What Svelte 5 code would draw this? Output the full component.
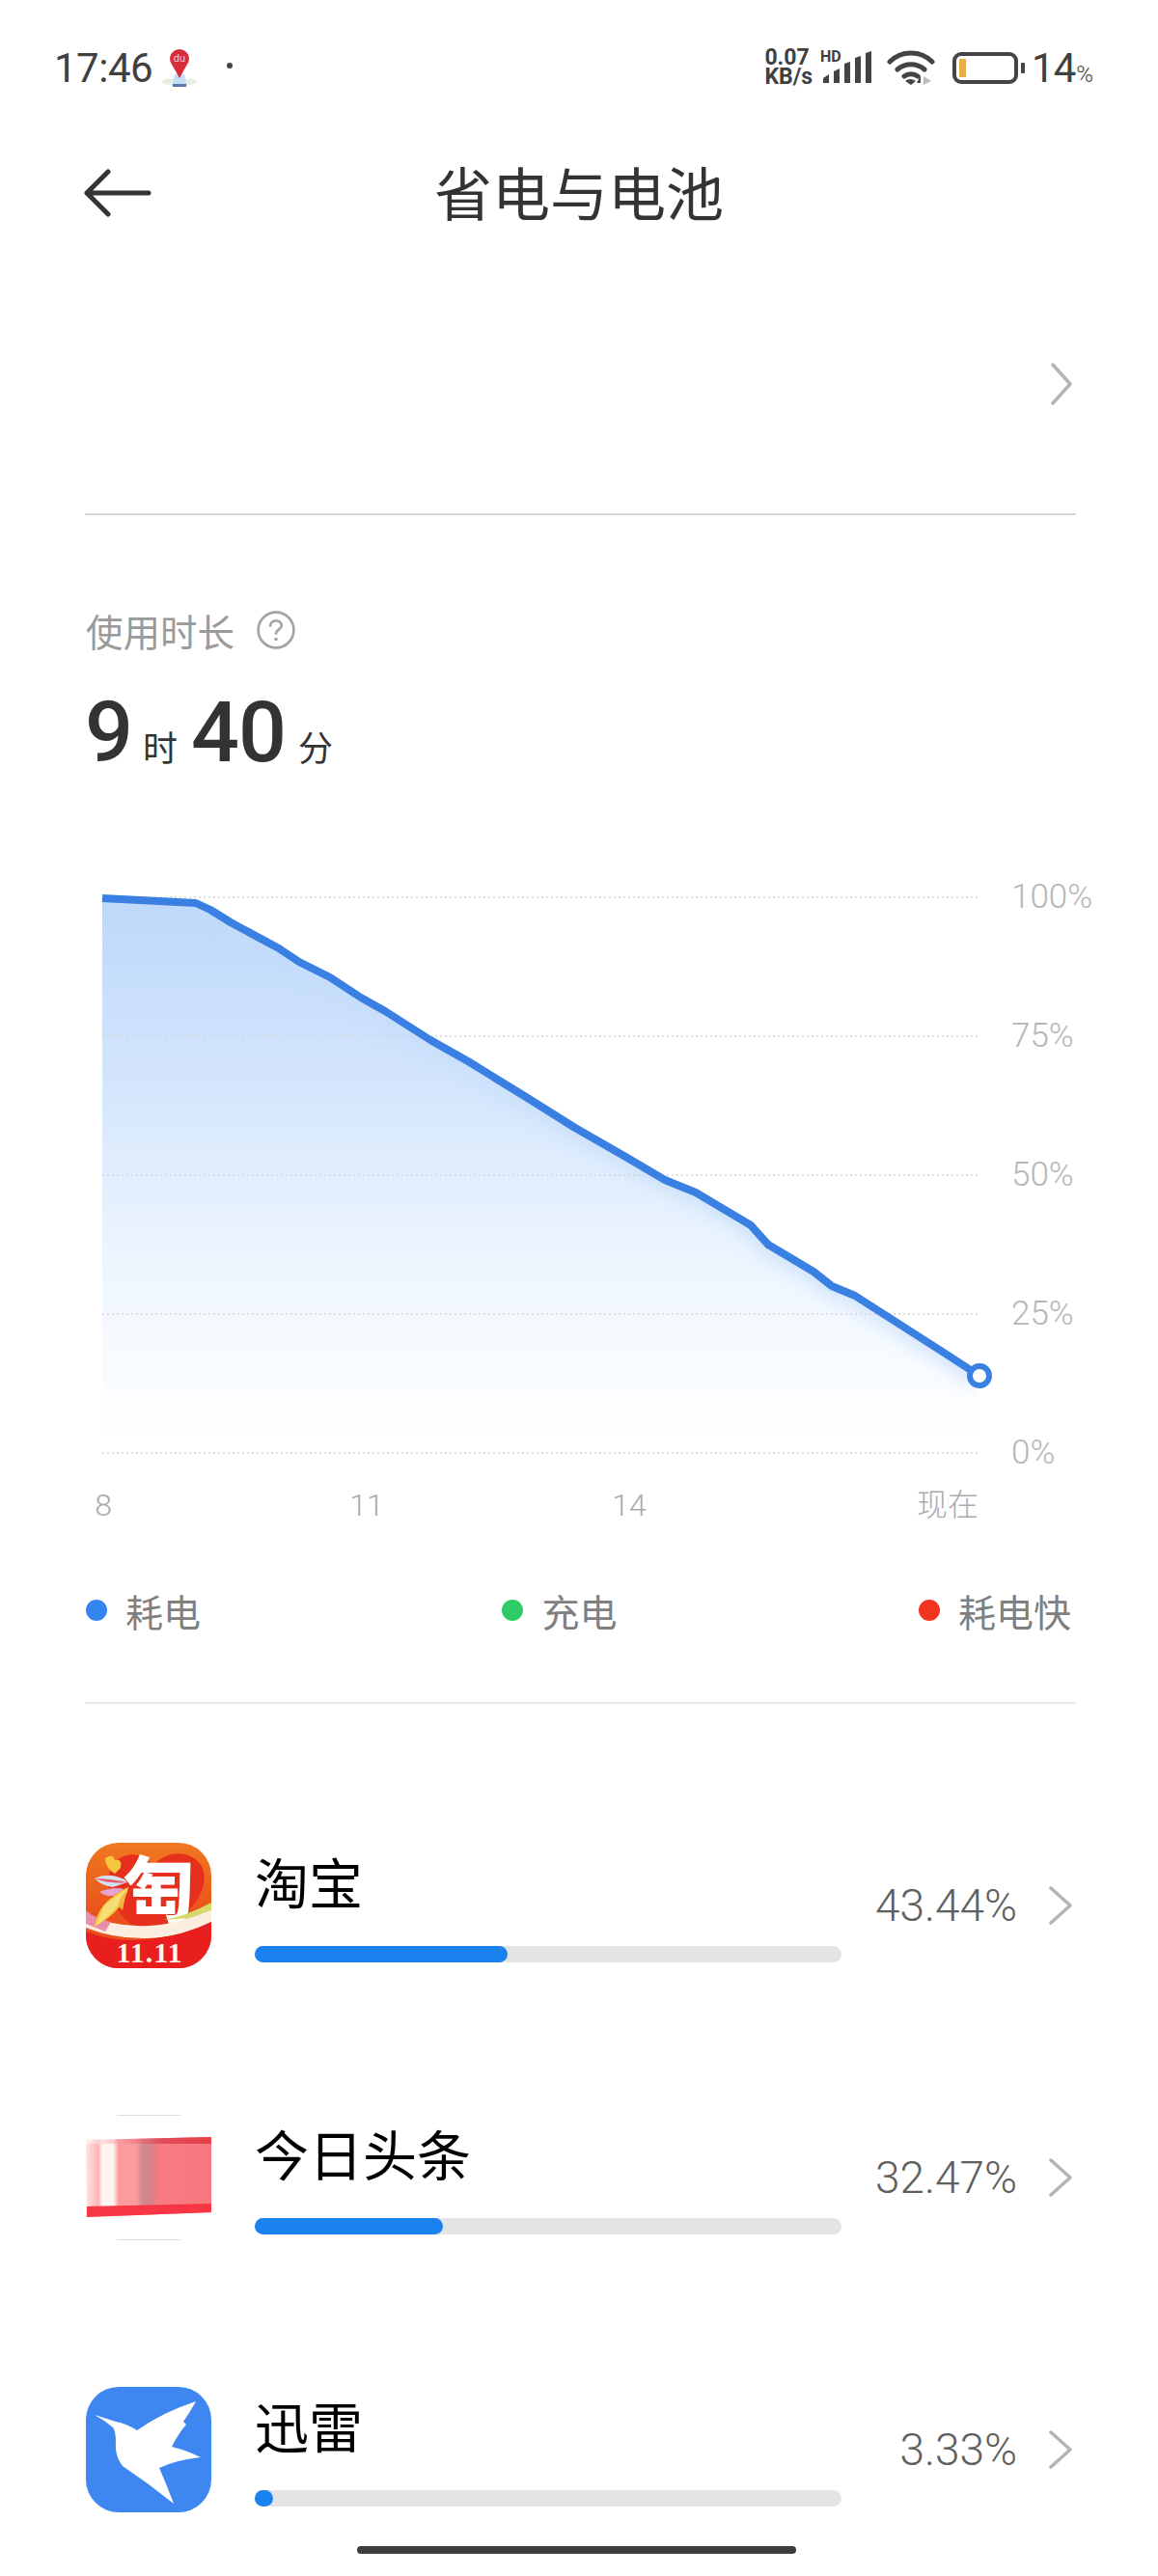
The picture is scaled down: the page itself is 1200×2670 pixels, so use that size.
<script lang="ts">
	const ticks = ['100%', '75%', '50%', '25%', '0%']
	const gridY = [930, 1074, 1218, 1362, 1506]
	const hours = ['8', '11', '14']
	const legend = [
		{ label: '耗电', color: '#3384ee' },
		{ label: '充电', color: '#2fcb67' },
		{ label: '耗电快', color: '#f0341f' }
	]
	const apps = [
		{ id: 'taobao', name: '淘宝', pct: '43.44%', fill: 262 },
		{ id: 'toutiao', name: '今日头条', pct: '32.47%', fill: 195 },
		{ id: 'xunlei', name: '迅雷', pct: '3.33%', fill: 19 }
	]
	const points = [
		[106, 931], [203, 936], [218, 943], [239, 956], [289, 983], [310, 997], [342, 1013],
		[374, 1034], [399, 1048], [446, 1078], [485, 1100], [545, 1137], [596, 1169],
		[650, 1200], [689, 1223], [721, 1236], [778, 1270], [796, 1290], [843, 1318],
		[862, 1333], [886, 1343], [925, 1368], [975, 1400], [1015, 1426]
	]
	const line = points.map((p) => p.join(',')).join(' ')
	const area = `${line} 1015,1506 106,1506`
</script>

<div class="page">
	<div class="status">
		<div class="status-left">
			<span class="time">17:46</span>
			<svg class="map-pin" width="44" height="46" viewBox="0 0 44 46" aria-hidden="true">
				<path d="M3 38q8-7 15-1l-5 4q-6 0-10-3zM41 38q-8-7-15-1l5 4q6 0 10-3z" fill="#e6efe0" />
				<path d="M17 30h10l3 12H14z" fill="#c4def3" />
				<rect x="15" y="40" width="14" height="3" fill="#5f78ab" />
				<path d="M22 34 14.500 20.500a10 10 0 1 1 15 0z" fill="#d92c3c" />
				<text x="22" y="17" class="du">du</text>
			</svg>
			<span class="dot"></span>
		</div>
		<div class="status-right">
			<div class="net"><span>0.07</span><span>KB/s</span></div>
			<div class="signal">
				<span class="hd">HD</span>
				<svg width="52" height="34" viewBox="0 0 52 34" aria-hidden="true">
					<path d="M1 28l6-4v9H1zM12 21l6-3v15h-6zM23 13l6-2v22h-6zM34 7l6-2v28h-6zM45 2l6-2v33h-6z" fill="#444" />
				</svg>
			</div>
			<svg class="wifi" width="52" height="38" viewBox="0 0 52 38" aria-hidden="true">
				<path d="M3 13C15 1 35 1 47 13M11 21c8-7 20-7 28 0M18 28c4-3 10-3 14 0" fill="none" stroke="#444" stroke-width="5" stroke-linecap="round" />
				<path d="M19 33q5-4 11 0l-5 4z" fill="#444" />
				<path d="M38 28l8 5-8 4z" fill="#bbb" />
				<path d="M35 27v8h-4z" fill="#444" />
			</svg>
			<div class="battery">
				<div class="cell"><span class="level"></span></div>
				<span class="nub"></span>
			</div>
			<span class="level-text">14<small>%</small></span>
		</div>
	</div>

	<header class="title-bar">
		<svg class="back" width="70" height="50" viewBox="0 0 70 50" aria-hidden="true">
			<path d="M67 25H3M25 3 3 25l22 22" fill="none" stroke="#333" stroke-width="5" stroke-linecap="round" stroke-linejoin="round" />
		</svg>
		<h1>省电与电池</h1>
	</header>

	<div class="blank-row">
		<svg width="24" height="44" viewBox="0 0 24 44" aria-hidden="true">
			<path d="M3 2l18 20L3 42" fill="none" stroke="#b4b4b4" stroke-width="3.500" stroke-linecap="round" stroke-linejoin="round" />
		</svg>
	</div>

	<section class="usage">
		<div class="usage-label">
			<span>使用时长</span>
			<svg width="42" height="42" viewBox="0 0 40 40" aria-hidden="true">
				<circle cx="20" cy="20" r="17.500" fill="none" stroke="#a3a3a3" stroke-width="2.500" />
				<path d="M14.500 16c0-3.200 2.400-5.200 5.500-5.200s5.500 2 5.500 4.800c0 3.700-5.500 3.900-5.500 8" fill="none" stroke="#a3a3a3" stroke-width="2.500" stroke-linecap="round" />
				<circle cx="20" cy="29" r="1.700" fill="#a3a3a3" />
			</svg>
		</div>
		<div class="duration">
			<b>9</b><span class="unit-h">时</span><b>40</b><span class="unit-m">分</span>
		</div>
	</section>

	<section class="chart">
		<svg class="plot" width="935" height="616" viewBox="100 910 935 616" aria-hidden="true">
			<defs>
				<linearGradient id="fade" gradientUnits="userSpaceOnUse" x1="0" y1="930" x2="0" y2="1490">
					<stop offset="0" stop-color="#bdd8fa" />
					<stop offset="0.35" stop-color="#d4e6fc" />
					<stop offset="0.6" stop-color="#e8f2fe" />
					<stop offset="0.78" stop-color="#f4f9ff" />
					<stop offset="1" stop-color="#ffffff" />
				</linearGradient>
				<clipPath id="under"><polygon points={area} /></clipPath>
				<filter id="soft" x="-10%" y="-10%" width="120%" height="120%">
					<feGaussianBlur stdDeviation="9" />
				</filter>
			</defs>
			<polygon points={area} fill="url(#fade)" />
			<g clip-path="url(#under)">
				<polyline points={line} fill="none" stroke="#c3dcfa" stroke-width="22" filter="url(#soft)" opacity="0.7" />
			</g>
			{#each gridY as y}
				<line x1="106" x2="1015" y1={y} y2={y} stroke="#d4d4d4" stroke-width="1.500" stroke-dasharray="2 3" />
			{/each}
			<polyline points={line} fill="none" stroke="#3a7fe2" stroke-width="8" stroke-linejoin="round" />
			<circle cx="1015" cy="1426" r="10" fill="#fff" stroke="#3a7fe2" stroke-width="6" />
		</svg>
		<div class="y-axis">
			{#each ticks as tick}
				<span>{tick}</span>
			{/each}
		</div>
	</section>

	<div class="x-axis">
		{#each hours as hour}
			<span><i>{hour}</i></span>
		{/each}
		<span>现在</span>
	</div>

	<div class="legend">
		{#each legend as item}
			<div class="legend-item">
				<span class="swatch" style={`background: ${item.color}`}></span>
				<span>{item.label}</span>
			</div>
		{/each}
	</div>

	<ul class="apps">
		{#each apps as app}
			<li>
				{#if app.id === 'taobao'}
					<svg class="icon" width="130" height="130" viewBox="0 0 130 130" aria-hidden="true">
						<defs>
							<clipPath id="tb"><rect width="130" height="130" rx="34" /></clipPath>
							<linearGradient id="tbBg" x1="0" y1="0" x2="0" y2="1">
								<stop offset="0" stop-color="#f0781f" />
								<stop offset="0.6" stop-color="#e9501b" />
							</linearGradient>
						</defs>
						<g clip-path="url(#tb)">
							<rect width="130" height="130" fill="url(#tbBg)" />
							<path d="M66 100C30 76 16 50 26 26 36 8 58 8 70 24 82 8 108 6 120 24 132 52 102 80 66 100z" fill="#e6301d" />
							<text x="76" y="76" class="tao">匋</text>
							<path d="M0 74q30 14 66 12t64-20v16q-32 16-66 17T0 88z" fill="#fbeee0" />
							<path d="M0 70q8 8 26 12L20 92 0 84z" fill="#e88dab" />
							<path d="M130 62q-26 14-50 18l28-2 22-8z" fill="#d9d86a" />
							<path d="M0 92q30 12 66 8t64-18v48H0z" fill="#e91f1f" />
							<text x="66" y="124" class="eleven">11.11</text>
							<path d="M20 16q8-6 10 2 8-2 6 8l-6 6q-10-6-10-16z" fill="#f6c63f" />
							<path d="M9 37q14-7 31 1l3 3-15 5q-11-1-19-9z" fill="#d3e1ee" />
							<path d="M9 37q14 0 34 4-18 2-34-4z" fill="#e85a70" />
							<path d="M14 51q13-6 26-3l-12 7q-8 1-14-4z" fill="#e7a3d0" />
							<path d="M44 46q-4 24-35 41 3-26 35-41z" fill="#f3c83a" />
							<path d="M44 46q-8 22-35 41 2-2 10-22z" fill="#f6dd75" />
							<path d="M34 66q0-9 8-16-2 10-4 20z" fill="#f2b444" />
						</g>
					</svg>
				{:else if app.id === 'toutiao'}
					<svg class="icon" width="130" height="130" viewBox="0 0 130 130" aria-hidden="true">
						<defs>
							<clipPath id="tt"><polygon points="0,26 130,23 130,101 1,106" /></clipPath>
							<linearGradient id="ttBars" x1="0" y1="0" x2="1" y2="0">
								<stop offset="0" stop-color="#ffe3e3" />
								<stop offset="0.1" stop-color="#fbb5b5" />
								<stop offset="0.13" stop-color="#fff4ef" />
								<stop offset="0.22" stop-color="#fff4ef" />
								<stop offset="0.26" stop-color="#fb9a9c" />
								<stop offset="0.4" stop-color="#f99ca0" />
								<stop offset="0.45" stop-color="#cf8a90" />
								<stop offset="0.53" stop-color="#d97f85" />
								<stop offset="0.58" stop-color="#f77c82" />
								<stop offset="1" stop-color="#f6787e" />
							</linearGradient>
							<linearGradient id="ttTop" x1="0" y1="0" x2="1" y2="0">
								<stop offset="0" stop-color="#fff" stop-opacity="0.6" />
								<stop offset="0.35" stop-color="#f58088" stop-opacity="0.6" />
								<stop offset="0.6" stop-color="#d8434e" stop-opacity="0.8" />
								<stop offset="1" stop-color="#ea3f48" />
							</linearGradient>
						</defs>
						<rect width="130" height="130" rx="34" fill="#fff" />
						<path d="M32 .5h66M32 129.500h66" stroke="#dcdcdc" />
						<g clip-path="url(#tt)">
							<rect y="20" width="130" height="90" fill="url(#ttBars)" />
							<rect y="20" width="130" height="10" fill="url(#ttTop)" />
							<polygon points="0,95 130,92 130,104 0,110" fill="#f63642" />
						</g>
					</svg>
				{:else}
					<svg class="icon" width="130" height="130" viewBox="0 0 130 130" aria-hidden="true">
						<rect width="130" height="130" rx="34" fill="#3f87f0" />
						<path d="M9 29Q22 33 31 36 42 38 53 45 80 26 114 15 108 26 101 36L104 39Q96 48 89 62 105 66 119 73 96 75 76 84 84 102 91 121 65 100 38 82 30 72 31 58 31 46 28 42 20 35 9 29z" fill="#fff" />
					</svg>
				{/if}
				<div class="app-main">
					<div class="app-name">{app.name}</div>
					<div class="track"><div class="bar" style={`width: ${app.fill}px`}></div></div>
				</div>
				<div class="pct">{app.pct}</div>
				<svg class="more" width="24" height="44" viewBox="0 0 24 44" aria-hidden="true">
					<path d="M2 4l20 18L2 40" fill="none" stroke="#b4b4b4" stroke-width="3.500" stroke-linecap="round" stroke-linejoin="round" />
				</svg>
			</li>
		{/each}
	</ul>

	<div class="home-bar"></div>
</div>

<style>
	:global(body) {
		background: #fff;
	}

	.page {
		position: relative;
		box-sizing: border-box;
		height: 2670px;
		overflow: hidden;
		padding: 0 85px 0 88px;
		background: #fff;
		font-family: 'Noto Sans CJK SC', sans-serif;
	}

	/* --- status bar --- */
	.status {
		display: flex;
		align-items: center;
		justify-content: space-between;
		height: 140px;
		margin: 0 -85px 0 -88px;
		padding: 0 68px 0 56px;
		color: #404040;
		font-family: Roboto, sans-serif;
	}

	.status-left,
	.status-right {
		display: flex;
		align-items: center;
	}

	.time {
		font-size: 42px;
		letter-spacing: -0.5px;
	}

	.map-pin {
		margin: 0 0 0 6px;
	}

	.du {
		fill: #f7c9cc;
		font-size: 11px;
		text-anchor: middle;
	}

	.dot {
		width: 6px;
		height: 6px;
		margin: -4px 0 0 27px;
		border-radius: 50%;
		background: #444;
	}

	.net {
		display: flex;
		flex-direction: column;
		font-size: 23px;
		font-weight: 700;
		line-height: 20px;
	}

	.signal {
		position: relative;
		width: 52px;
		height: 34px;
		margin: 0 15px 0 10px;
	}

	.hd {
		position: absolute;
		top: -2px;
		left: -2px;
		font-size: 16px;
		font-weight: 700;
		line-height: 15px;
	}

	.wifi {
		margin-right: 16px;
	}

	.battery {
		display: flex;
		align-items: center;
		gap: 3px;
	}

	.cell {
		box-sizing: border-box;
		width: 68px;
		height: 33px;
		padding: 3px;
		border: 4px solid #444;
		border-radius: 9px;
	}

	.level {
		display: block;
		width: 7px;
		height: 100%;
		background: #e9ad47;
		border-radius: 1px;
	}

	.nub {
		width: 4px;
		height: 11px;
		background: #444;
		border-radius: 1px;
	}

	.level-text {
		margin-left: 7px;
		font-size: 42px;
		letter-spacing: -1px;
	}

	.level-text small {
		margin-left: 1px;
		font-size: 24px;
		font-weight: 300;
	}

	/* --- title --- */
	.title-bar {
		position: relative;
		display: flex;
		align-items: center;
		justify-content: center;
		height: 120px;
	}

	.back {
		position: absolute;
		left: -1px;
		top: 35px;
	}

	h1 {
		margin: -4px 0 0 -3px;
		color: #333;
		font-size: 60px;
		font-weight: 400;
		line-height: 120px;
	}

	.blank-row {
		display: flex;
		align-items: center;
		justify-content: flex-end;
		box-sizing: border-box;
		height: 274px;
		padding: 4px 3px 0 0;
		border-bottom: 2px solid #d8d8d8;
	}

	/* --- usage --- */
	.usage {
		margin-top: 94px;
	}

	.usage-label {
		display: flex;
		align-items: center;
		gap: 22px;
		height: 50px;
		padding-left: 1px;
		color: #9a9a9a;
		font-size: 38.500px;
		line-height: 50px;
	}

	.duration {
		display: flex;
		align-items: baseline;
		height: 100px;
		margin-top: 31px;
		color: #333;
		line-height: 100px;
	}

	.duration b {
		font-family: Roboto, sans-serif;
		font-size: 88px;
		font-weight: 500;
		letter-spacing: -1px;
	}

	.duration span {
		font-size: 36px;
	}

	.unit-h {
		margin: 0 14px 0 11px;
	}

	.unit-m {
		margin-left: 13px;
	}

	/* --- chart --- */
	.chart {
		display: flex;
		gap: 13px;
		margin: 101px -85px 0 12px;
	}

	.plot {
		display: block;
		flex: none;
	}

	.y-axis {
		display: flex;
		flex-direction: column;
		justify-content: space-between;
		color: #b6b6b6;
		font-family: Roboto, sans-serif;
		font-size: 35px;
		font-weight: 300;
		line-height: 40px;
	}

	.x-axis {
		display: grid;
		grid-template-columns: 273px 272px 1fr 65px;
		width: 928px;
		margin: 14px 0 0 -1px;
		color: #ababab;
		font-family: Roboto, 'Noto Sans CJK SC', sans-serif;
		font-size: 32px;
		font-weight: 300;
		line-height: 40px;
	}

	.x-axis i {
		display: block;
		width: 40px;
		font-style: normal;
		text-align: center;
	}

	.legend {
		display: flex;
		justify-content: space-between;
		padding: 0 5px 70px 1px;
		margin-top: 64px;
		border-bottom: 2px solid #e9e9e9;
	}

	.legend-item {
		display: flex;
		align-items: center;
		gap: 19px;
		color: #7f7f7f;
		font-size: 39px;
		line-height: 50px;
	}

	.swatch {
		width: 22px;
		height: 22px;
		border-radius: 50%;
	}

	/* --- apps --- */
	.apps {
		margin: 68px 0 0;
		padding: 0;
		list-style: none;
	}

	.apps li {
		display: flex;
		align-items: center;
		height: 282px;
		padding: 0 4px 0 1px;
	}

	.icon {
		display: block;
		flex: none;
	}

	.app-main {
		flex: none;
		width: 608px;
		margin-left: 45px;
	}

	.app-name {
		margin-top: -3px;
		color: #000;
		font-size: 56px;
		line-height: 72px;
	}

	.track {
		height: 17px;
		margin-top: 32px;
		border-radius: 9px;
		background: #e4e4e4;
	}

	.bar {
		height: 100%;
		border-radius: 9px;
		background: #1a82ee;
	}

	.pct {
		flex: 1;
		color: #5f5f5f;
		font-family: Roboto, sans-serif;
		font-size: 46px;
		font-weight: 300;
		text-align: right;
	}

	.more {
		flex: none;
		margin-left: 33px;
	}

	.eleven {
		fill: #fff6e8;
		font-family: 'Liberation Serif', serif;
		font-size: 30px;
		font-weight: 700;
		letter-spacing: 1px;
		text-anchor: middle;
	}

	.tao {
		fill: #fff;
		font-family: 'Noto Sans CJK SC', sans-serif;
		font-size: 74px;
		font-weight: 900;
		text-anchor: middle;
	}

	.home-bar {
		position: absolute;
		left: 370px;
		bottom: 23px;
		width: 455px;
		height: 8px;
		border-radius: 4px;
		background: #3c3c3c;
	}
</style>
